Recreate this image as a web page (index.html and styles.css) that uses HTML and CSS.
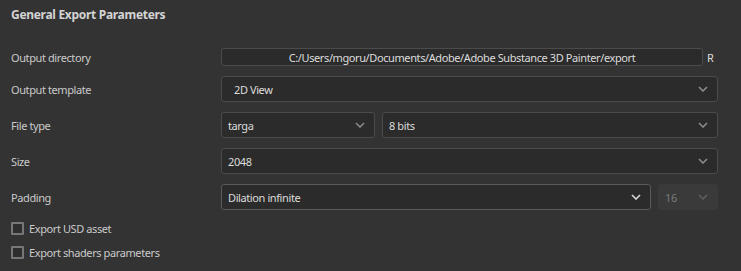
FILE: index.html
```html
<!DOCTYPE html>
<html lang="en">
<head>
    <meta charset="UTF-8">
    <meta name="viewport" content="width=device-width, initial-scale=1.0">
    <title>Export</title>
    <link rel="stylesheet" href="styles.css">
</head>
<body>
    <div class="panel">
        <div class="panel-title">General Export Parameters</div>

        <div class="row row-dir">
            <div class="label">Output directory</div>
            <div class="dir-field">C:/Users/mgoru/Documents/Adobe/Adobe Substance 3D Painter/export</div>
            <div class="dir-suffix">R</div>
        </div>

        <div class="row">
            <div class="label">Output template</div>
            <div class="select select-wide">
                <span class="select-text">2D View</span>
                <svg class="chevron" width="10" height="6" viewBox="0 0 10 6"><polyline points="1,1 5,5 9,1"/></svg>
            </div>
        </div>

        <div class="row">
            <div class="label">File type</div>
            <div class="select select-type">
                <span>targa</span>
                <svg class="chevron" width="10" height="6" viewBox="0 0 10 6"><polyline points="1,1 5,5 9,1"/></svg>
            </div>
            <div class="select select-grow">
                <span>8 bits</span>
                <svg class="chevron" width="10" height="6" viewBox="0 0 10 6"><polyline points="1,1 5,5 9,1"/></svg>
            </div>
        </div>

        <div class="row">
            <div class="label">Size</div>
            <div class="select select-grow">
                <span>2048</span>
                <svg class="chevron" width="10" height="6" viewBox="0 0 10 6"><polyline points="1,1 5,5 9,1"/></svg>
            </div>
        </div>

        <div class="row">
            <div class="label">Padding</div>
            <div class="select select-grow active">
                <span>Dilation infinite</span>
                <svg class="chevron" width="10" height="6" viewBox="0 0 10 6"><polyline points="1,1 5,5 9,1"/></svg>
            </div>
            <div class="select disabled">
                <span>16</span>
                <svg class="chevron" width="10" height="6" viewBox="0 0 10 6"><polyline points="1,1 5,5 9,1"/></svg>
            </div>
        </div>

        <div class="checks">
            <label class="check"><span class="box"></span>Export USD asset</label>
            <label class="check"><span class="box"></span>Export shaders parameters</label>
        </div>
    </div>
</body>
</html>
```

FILE: styles.css
```css
body {
    margin: 0;
    background-color: #333333;
    font-family: 'Noto Sans', 'Open Sans', sans-serif;
    font-size: 11px;
    letter-spacing: -0.4px;
    color: #cacaca;
}

.panel {
    width: 741px;
    height: 271px;
    padding: 0 23px 0 11px;
    box-sizing: border-box;
}

.panel-title {
    height: 44px;
    padding-top: 6px;
    box-sizing: border-box;
    line-height: 18px;
    font-size: 12px;
    font-weight: 700;
    letter-spacing: -0.3px;
    color: #d4d4d4;
}

.row {
    display: flex;
    align-items: center;
    gap: 7px;
    height: 26px;
    margin-bottom: 10px;
}

.row-dir {
    margin-bottom: 6px;
    gap: 0;
}

.label {
    width: 203px;
    flex-shrink: 0;
}

.row-dir .label {
    width: 210px;
}

.dir-field {
    flex: 1;
    height: 18px;
    line-height: 17px;
    box-sizing: border-box;
    border: 1px solid #4b4b4b;
    border-radius: 3px;
    background-color: #2b2b2b;
    color: #dcdcdc;
    text-align: center;
}

.dir-suffix {
    width: 15px;
    padding-left: 4px;
    box-sizing: border-box;
    color: #dcdcdc;
}

.select {
    display: flex;
    align-items: center;
    justify-content: space-between;
    height: 26px;
    box-sizing: border-box;
    padding: 0 9px 0 6px;
    border: 1px solid #4b4b4b;
    border-radius: 3px;
    background-color: #2b2b2b;
    color: #dcdcdc;
}

.select-wide {
    flex: 1;
    padding-left: 12px;
}

.select-grow {
    flex: 1;
}

.select-type {
    width: 154px;
}

.chevron {
    fill: none;
    stroke: #8a8a8a;
    stroke-width: 1.6;
}

.active {
    border-color: #5a5a5a;
}

.active .chevron {
    stroke: #d8d8d8;
}

.disabled {
    width: 60px;
    border-color: #3a3a3a;
    background-color: #3a3a3a;
    color: #7a7a7a;
}

.disabled .chevron {
    stroke: #5e5e5e;
}

.checks {
    margin-top: -4px;
}

.check {
    display: flex;
    align-items: center;
    height: 24px;
}

.box {
    width: 13px;
    height: 13px;
    box-sizing: border-box;
    border: 2px solid #777777;
    border-radius: 1px;
    background-color: #2e2e2e;
    margin-right: 5px;
}
```
